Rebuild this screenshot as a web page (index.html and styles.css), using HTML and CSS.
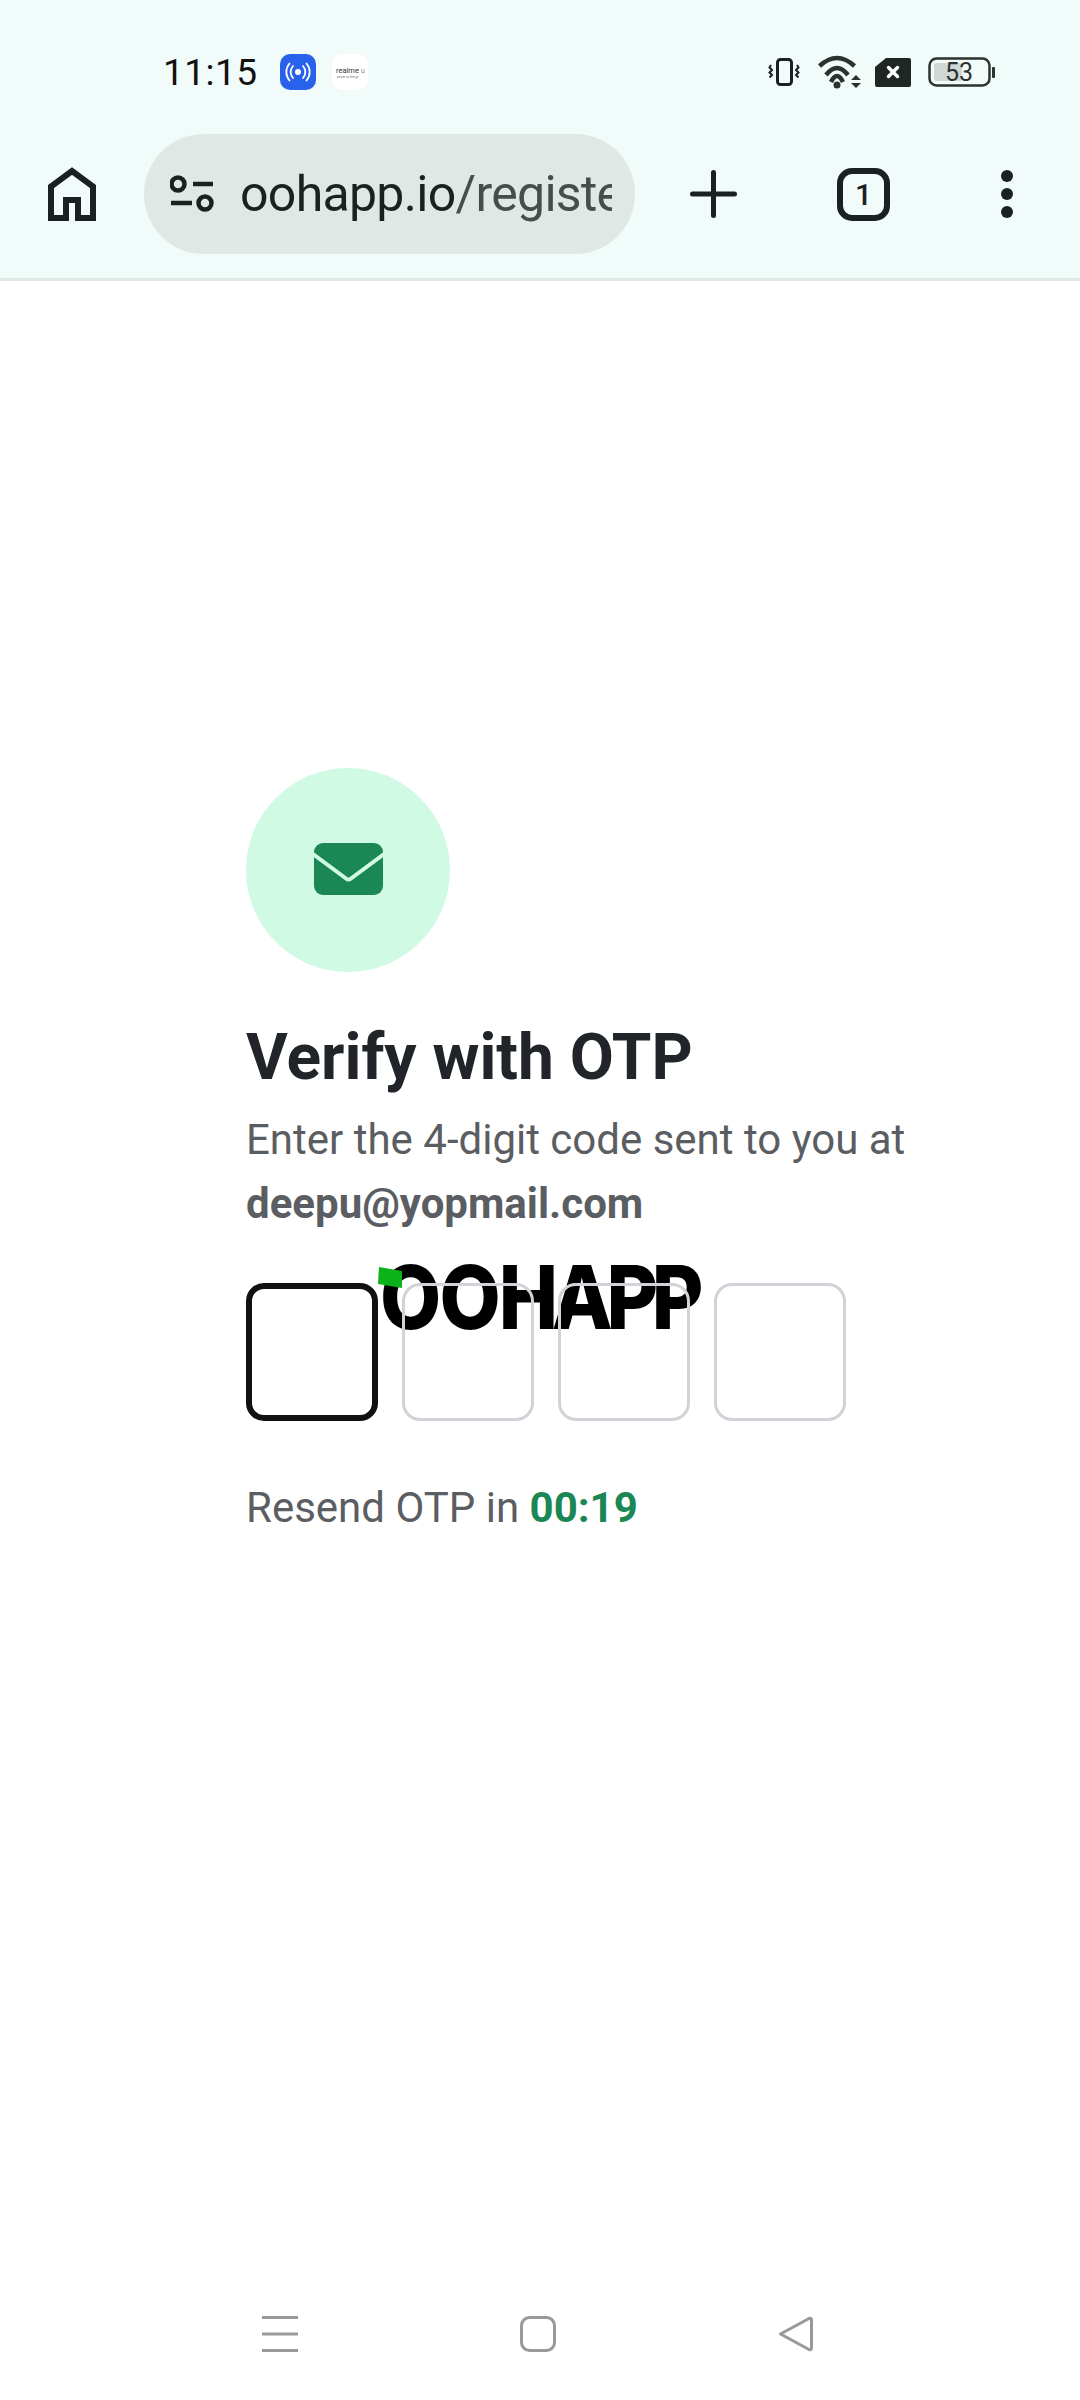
FILE: index.html
```html
<!DOCTYPE html>
<html lang="en">
<head>
    <meta charset="UTF-8">
    <meta name="viewport" content="width=device-width, initial-scale=1.0">
    <title>Verify with OTP</title>
    <link rel="stylesheet" href="styles.css">
</head>
<body>
    <header class="browser-top">
        <div class="status-bar">
            <div class="status-left">
                <span class="clock">11:15</span>
                <svg class="app-icon" width="36" height="36" viewBox="0 0 36 36">
                    <rect width="36" height="36" rx="10" fill="#2962ea"/>
                    <circle cx="18" cy="18" r="3" fill="#fff"/>
                    <path d="M13 12a9 9 0 0 0 0 12M23 12a9 9 0 0 1 0 12M9.500 9.500a13 13 0 0 0 0 17M26.500 9.500a13 13 0 0 1 0 17" fill="none" stroke="#fff" stroke-width="1.800" stroke-linecap="round"/>
                </svg>
                <svg class="app-icon" width="36" height="36" viewBox="0 0 36 36">
                    <rect width="36" height="36" rx="10" fill="#fff"/>
                    <text x="4" y="19" class="realme-name">realme <tspan fill="#8a8fb0">u</tspan></text>
                    <text x="5" y="24" class="realme-sub">power on the go</text>
                </svg>
            </div>
            <div class="status-right">
                <svg width="32" height="28" viewBox="0 0 32 28" fill="none" stroke="#1b2120">
                    <rect x="9.500" y="1.500" width="14" height="25" rx="3" stroke-width="3"/>
                    <path d="M3 7l-1.500 2.500 2.500 2.500-2.500 2.500 2.500 2.500-2.500 2.500M29 7l1.500 2.500-2.500 2.500 2.500 2.500-2.500 2.500 2.500 2.500" stroke-width="2"/>
                </svg>
                <svg class="wifi" width="45" height="34" viewBox="0 0 45 34">
                    <path d="M2.500 11Q20-5 37.500 11M9 20Q20 6 31 20M14 27Q20 15 26 27" fill="none" stroke="#2b3230" stroke-width="4.500"/>
                    <circle cx="20" cy="30" r="3.500" fill="#2b3230"/>
                    <path d="M34 25l5-5 5 5zM34 28h10l-5 5z" fill="#2b3230"/>
                </svg>
                <svg class="sim" width="36" height="29" viewBox="0 0 36 29">
                    <path d="M11 0H34a2 2 0 0 1 2 2V27a2 2 0 0 1-2 2H2a2 2 0 0 1-2-2V9z" fill="#1f2624"/>
                    <path d="M13.500 9.500l9 9M22.500 9.500l-9 9" stroke="#fff" stroke-width="3.500" stroke-linecap="round"/>
                </svg>
                <svg class="battery" width="67" height="30" viewBox="0 0 67 30">
                    <rect x="1.500" y="1.500" width="60" height="27" rx="7" fill="none" stroke="#2b3230" stroke-width="2.500"/>
                    <rect x="6" y="6" width="28" height="18" rx="2" fill="#d0d8d6"/>
                    <rect x="64" y="10" width="3" height="11" rx="1" fill="#2b3230"/>
                    <text x="31" y="24" class="battery-level">53</text>
                </svg>
            </div>
        </div>
        <div class="toolbar">
            <svg class="home" width="48" height="54" viewBox="0 0 48 54">
                <path d="M3 51V19.500L24 4l21 15.500V51H30V33H18V51z" fill="none" stroke="#1b2120" stroke-width="6"/>
            </svg>
            <div class="url-pill">
                <svg class="tune" width="44" height="38" viewBox="0 0 44 38" fill="none" stroke="#1b2120" stroke-width="4.500">
                    <circle cx="8" cy="9" r="6.500"/>
                    <path d="M23 9H43M1 28H22"/>
                    <circle cx="35" cy="28" r="6.500"/>
                </svg>
                <div class="url-text"><span class="url-host">oohapp.io</span>/register</div>
            </div>
            <svg class="plus" width="47" height="48" viewBox="0 0 47 48">
                <path d="M2.500 24H44.500M23.500 2.500V45.500" stroke="#1b2120" stroke-width="5" stroke-linecap="round"/>
            </svg>
            <div class="tab-count">1</div>
            <svg class="more" width="12" height="48" viewBox="0 0 12 48" fill="#1b2120">
                <circle cx="6" cy="6" r="6"/>
                <circle cx="6" cy="24" r="6"/>
                <circle cx="6" cy="42" r="6"/>
            </svg>
        </div>
    </header>

    <main class="verify">
        <div class="mail-badge">
            <svg width="69" height="52" viewBox="0 0 69 52">
                <rect width="69" height="52" rx="9" fill="#1a8754"/>
                <path d="M-1 11L32 35.500q2.500 2 5 0L70 11" fill="none" stroke="#d1fae5" stroke-width="4"/>
            </svg>
        </div>
        <h1 class="verify-title">Verify with OTP</h1>
        <p class="verify-sub">Enter the 4-digit code sent to you at<br><strong>deepu@yopmail.com</strong></p>
        <div class="otp-row">
            <!-- logo sits behind the boxes, the page overlaps them -->
            <div class="logo">
                <span class="logo-text"><span class="logo-oo">OO</span>HAPP</span>
                <svg class="logo-flag" width="24" height="21" viewBox="0 0 24 21">
                    <path d="M1 0L24 4V21L0 17z" fill="#0cb21a"/>
                </svg>
            </div>
            <div class="otp-box otp-box-active"></div>
            <div class="otp-box"></div>
            <div class="otp-box"></div>
            <div class="otp-box"></div>
        </div>
        <p class="resend">Resend OTP in <strong class="resend-timer">00:19</strong></p>
    </main>

    <nav class="nav-bar">
        <svg width="36" height="36" viewBox="0 0 36 36" fill="#999">
            <rect y="0" width="36" height="3"/>
            <rect y="16.500" width="36" height="3"/>
            <rect y="33" width="36" height="3"/>
        </svg>
        <svg width="36" height="36" viewBox="0 0 36 36">
            <rect x="1.500" y="1.500" width="33" height="33" rx="8" fill="none" stroke="#999" stroke-width="3"/>
        </svg>
        <svg width="35" height="36" viewBox="0 0 35 36">
            <path d="M2.500 18L31 2.500q2.500-1 2.500 1.500V32q0 2.500-2.500 1.500z" fill="none" stroke="#999" stroke-width="3" stroke-linejoin="round"/>
        </svg>
    </nav>
</body>
</html>
```

FILE: styles.css
```css
* {
    box-sizing: border-box;
}
body {
    margin: 0;
    width: 1080px;
    height: 2400px;
    display: flex;
    flex-direction: column;
    background: #fff;
    font-family: Roboto, "Liberation Sans", sans-serif;
    overflow: hidden;
}
svg {
    display: block;
    flex-shrink: 0;
}
.browser-top {
    background: #f1fbf9;
    border-bottom: 3px solid #dfe8e5;
}
.status-bar {
    height: 110px;
    padding: 34px 85px 0 163px;
    display: flex;
    justify-content: space-between;
    align-items: center;
}
.status-left {
    display: flex;
    align-items: center;
}
.clock {
    width: 93px;
    margin-right: 24px;
    font-size: 37px;
    letter-spacing: 0.5px;
    color: #111;
}
.app-icon + .app-icon {
    margin-left: 16px;
}
.realme-name {
    font-size: 7.500px;
    fill: #333;
}
.realme-sub {
    font-size: 3px;
    fill: #777;
}
.status-right {
    display: flex;
    align-items: center;
}
.wifi {
    margin-left: 17px;
}
.sim {
    margin-left: 13px;
}
.battery {
    margin-left: 17px;
}
.battery-level {
    font-size: 25px;
    fill: #2b3230;
    text-anchor: middle;
}
.toolbar {
    height: 168px;
    padding-left: 48px;
    display: flex;
    align-items: center;
}
.url-pill {
    width: 491px;
    height: 120px;
    margin-left: 48px;
    padding-left: 26px;
    display: flex;
    align-items: center;
    border-radius: 60px;
    background: #e0e8e6;
}
.url-text {
    width: 212px;
    flex: 1;
    margin: 0 23px 0 26px;
    overflow: hidden;
    white-space: nowrap;
    font-size: 50px;
    letter-spacing: -0.7px;
    color: #444f4c;
}
.url-host {
    color: #1b2120;
}
.plus {
    margin-left: 55px;
}
.tab-count {
    width: 53px;
    height: 53px;
    margin-left: 100px;
    display: flex;
    align-items: center;
    justify-content: center;
    border: 6px solid #1b2120;
    border-radius: 15px;
    font-size: 30px;
    font-weight: 500;
    color: #1b2120;
}
.more {
    margin-left: 111px;
}
.verify {
    flex: 1;
    padding: 487px 0 0 246px;
}
.mail-badge {
    width: 204px;
    height: 204px;
    padding-bottom: 3px;
    display: flex;
    align-items: center;
    justify-content: center;
    border-radius: 50%;
    background: #d1fae5;
}
.verify-title {
    margin: 48px 0 0;
    font-size: 64px;
    line-height: 76px;
    font-weight: 700;
    color: #212529;
}
.verify-sub {
    margin: 12px 0 0;
    font-size: 42px;
    line-height: 64px;
    color: #5a5d61;
}
.otp-row {
    position: relative;
    margin-top: 47px;
    display: flex;
    gap: 24px;
}
.otp-box {
    position: relative;
    width: 132px;
    height: 138px;
    border: 3px solid #d0d3d8;
    border-radius: 18px;
}
.otp-box-active {
    border: 6px solid #111;
}
.logo {
    position: absolute;
    left: 132px;
    top: -19px;
}
.logo-flag {
    position: absolute;
    left: 0;
    top: 3px;
}
.logo-text {
    display: block;
    margin-left: 2px;
    font-family: Inter, "Liberation Sans", sans-serif;
    font-size: 88px;
    line-height: 66px;
    font-weight: 800;
    letter-spacing: -7px;
    color: #000;
    transform: scaleX(0.9);
    transform-origin: left center;
}
.logo-oo {
    letter-spacing: -2px;
}
.resend {
    margin: 57px 0 0;
    font-size: 42px;
    line-height: 60px;
    color: #5a5d61;
}
.resend-timer {
    color: #1a8754;
}
.nav-bar {
    padding: 0 267px 48px 262px;
    display: flex;
    justify-content: space-between;
}
```
